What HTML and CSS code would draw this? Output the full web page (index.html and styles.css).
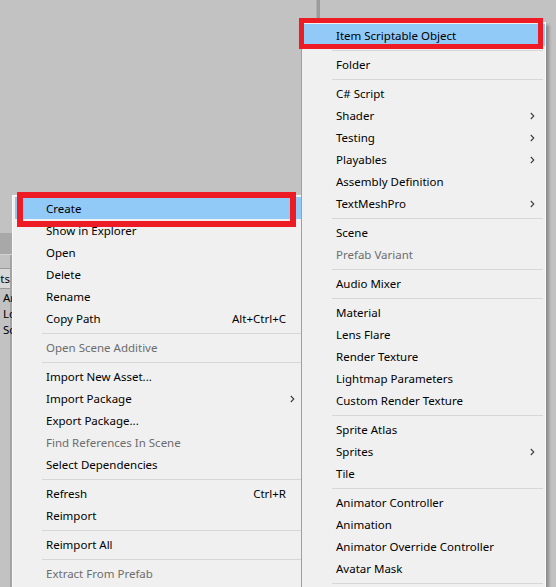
FILE: index.html
```html
<!DOCTYPE html>
<html>
<head>
<meta charset="utf-8">
<title>Project context menu</title>
<link rel="stylesheet" href="styles.css">
</head>
<body>
<div class="editor">
  <div class="side">
    <div class="side-top"></div>
    <div class="side-toolbar"></div>
    <div class="side-panel">
      <div class="side-gap"></div>
      <div class="side-tabs"><span>Assets</span></div>
      <div class="side-list">
        <div class="side-row">Art</div>
        <div class="side-row">Logic</div>
        <div class="side-row">Scripts</div>
      </div>
    </div>
  </div>
  <div class="scene"></div>
  <div class="splitter"></div>
  <div class="inspector"></div>
</div>

<div class="menu menu-main">
  <div class="item hl">Create</div>
  <div class="item">Show in Explorer</div>
  <div class="item">Open</div>
  <div class="item">Delete</div>
  <div class="item">Rename</div>
  <div class="item">Copy Path<span class="shortcut">Alt+Ctrl+C</span></div>
  <div class="sep"></div>
  <div class="item off">Open Scene Additive</div>
  <div class="sep"></div>
  <div class="item">Import New Asset...</div>
  <div class="item">Import Package<svg class="arrow" width="5" height="8" viewBox="0 0 5 8"><polyline points="0.8,1 3.8,4 0.8,7" fill="none" stroke="#3c3c3c" stroke-width="1.1"/></svg></div>
  <div class="item">Export Package...</div>
  <div class="item off">Find References In Scene</div>
  <div class="item">Select Dependencies</div>
  <div class="sep"></div>
  <div class="item">Refresh<span class="shortcut">Ctrl+R</span></div>
  <div class="item">Reimport</div>
  <div class="sep"></div>
  <div class="item">Reimport All</div>
  <div class="sep"></div>
  <div class="item off">Extract From Prefab</div>
  <div class="sep"></div>
  <div class="item">Run API Updater...</div>
</div>

<div class="menu menu-sub">
  <div class="item hl">Item Scriptable Object</div>
  <div class="sep"></div>
  <div class="item">Folder</div>
  <div class="sep"></div>
  <div class="item">C# Script</div>
  <div class="item">Shader<svg class="arrow" width="5" height="8" viewBox="0 0 5 8"><polyline points="0.8,1 3.8,4 0.8,7" fill="none" stroke="#3c3c3c" stroke-width="1.1"/></svg></div>
  <div class="item">Testing<svg class="arrow" width="5" height="8" viewBox="0 0 5 8"><polyline points="0.8,1 3.8,4 0.8,7" fill="none" stroke="#3c3c3c" stroke-width="1.1"/></svg></div>
  <div class="item">Playables<svg class="arrow" width="5" height="8" viewBox="0 0 5 8"><polyline points="0.8,1 3.8,4 0.8,7" fill="none" stroke="#3c3c3c" stroke-width="1.1"/></svg></div>
  <div class="item">Assembly Definition</div>
  <div class="item">TextMeshPro<svg class="arrow" width="5" height="8" viewBox="0 0 5 8"><polyline points="0.8,1 3.8,4 0.8,7" fill="none" stroke="#3c3c3c" stroke-width="1.1"/></svg></div>
  <div class="sep"></div>
  <div class="item">Scene</div>
  <div class="item off">Prefab Variant</div>
  <div class="sep"></div>
  <div class="item">Audio Mixer</div>
  <div class="sep"></div>
  <div class="item">Material</div>
  <div class="item">Lens Flare</div>
  <div class="item">Render Texture</div>
  <div class="item">Lightmap Parameters</div>
  <div class="item">Custom Render Texture</div>
  <div class="sep"></div>
  <div class="item">Sprite Atlas</div>
  <div class="item">Sprites<svg class="arrow" width="5" height="8" viewBox="0 0 5 8"><polyline points="0.8,1 3.8,4 0.8,7" fill="none" stroke="#3c3c3c" stroke-width="1.1"/></svg></div>
  <div class="item">Tile</div>
  <div class="sep"></div>
  <div class="item">Animator Controller</div>
  <div class="item">Animation</div>
  <div class="item">Animator Override Controller</div>
  <div class="item">Avatar Mask</div>
  <div class="sep"></div>
  <div class="item">Timeline</div>
</div>

<div class="callout callout-create"></div>
<div class="callout callout-item"></div>
</body>
</html>
```

FILE: styles.css
```css
* { box-sizing: border-box; }

body {
  margin: 0;
  width: 556px;
  height: 587px;
  overflow: hidden;
  position: relative;
  background: #c2c2c2;
  font-family: "Noto Sans", "Liberation Sans", sans-serif;
  font-size: 11.5px;
  color: #000;
}

.editor {
  display: flex;
  height: 587px;
}

.side {
  width: 12px;
  display: flex;
  flex-direction: column;
  white-space: nowrap;
}

.side-top { height: 233px; }

.side-toolbar {
  height: 22px;
  background: #a8a8a8;
  border-bottom: 1px solid #d2d2d2;
}

.side-panel {
  flex: 1;
  border-right: 2px solid #a3a3a3;
}

.side-gap { height: 13px; }

.side-tabs {
  height: 21px;
  background: #d8d8d8;
  border-top: 1px solid #9a9a9a;
  border-bottom: 1px solid #9a9a9a;
  display: flex;
  justify-content: flex-end;
  align-items: center;
  overflow: hidden;
}

.side-list {
  display: flex;
  flex-direction: column;
  padding-top: 1px;
}

.side-row {
  height: 16px;
  line-height: 16px;
  padding-left: 3px;
}

.scene { width: 304px; }

.splitter {
  width: 4px;
  background: #9b9b9b;
  border-left: 1px solid #b0b0b0;
}

.inspector { flex: 1; }

/* menus */
.menu {
  position: absolute;
  background: #f0f0f0;
  box-shadow: 3px 3px 3px rgba(0, 0, 0, 0.28);
}

.menu-main {
  left: 12px;
  top: 195px;
  width: 294px;
  border: 1px solid #f9f9f9;
  padding: 1px 0 0 2px;
}

.menu-sub {
  left: 301px;
  top: 22px;
  width: 245px;
  border-left: 1px solid #a0a0a0;
  border-top: 1px solid #f9f9f9;
  border-right: 1px solid #f9f9f9;
  padding: 1px 0 0 2px;
}

.item {
  height: 22px;
  line-height: 20px;
  padding: 2px 10px 0 31px;
  display: flex;
  align-items: center;
  white-space: nowrap;
}

.menu-sub .item { padding-left: 32px; }

.item.hl { background: #91c9f7; }

.item.off { color: #6d6d6d; }

.shortcut {
  margin-left: auto;
  margin-right: 9px;
}

.arrow {
  margin-left: auto;
  display: block;
}

.sep {
  height: 1px;
  background: #d7d7d7;
  margin: 4px 2px 2px 27px;
}

.menu-sub .sep { margin-left: 28px; }

/* annotation boxes */
.callout {
  position: absolute;
  border: 6px solid #ed1c24;
}

.callout-create {
  left: 17px;
  top: 192px;
  width: 279px;
  height: 35px;
}

.callout-item {
  left: 299px;
  top: 18px;
  width: 244px;
  height: 31px;
  border-width: 5px;
}
```
